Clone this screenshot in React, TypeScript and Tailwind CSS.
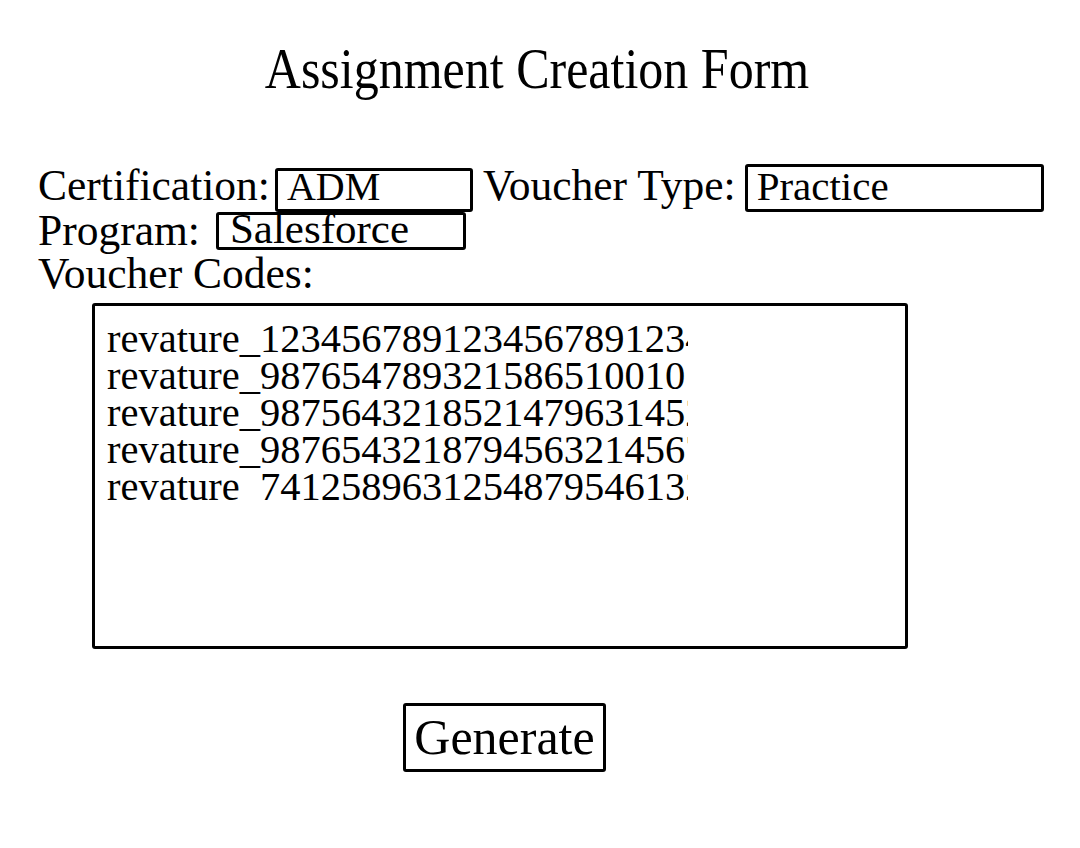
import React from 'react';

const CODES = [
  'revature_1234567891234567891234567',
  'revature_9876547893215865100101234',
  'revature_9875643218521479631452587',
  'revature_9876543218794563214567893',
  'revature_7412589631254879546132589',
];

export default function App() {
  return (
    <div className="min-h-screen bg-white text-black font-['Liberation_Serif',serif]">
      <div className="pt-[38px] pr-[6px] text-center">
        <h1 className="inline-block text-[50px] leading-[60px] font-normal scale-y-[1.15]">
          Assignment Creation Form
        </h1>
      </div>

      <div className="mt-[66px] pl-[38px]">
        {/* row 1 */}
        <div className="flex items-start">
          <span className="text-[43.5px] leading-[43px] whitespace-nowrap">Certification:</span>
          <div className="mt-[4px] ml-[5px] h-[44px] w-[198px] border-[3px] border-black rounded-[3px] pl-[9px] text-[40px] leading-[31px]">
            ADM
          </div>
          <span className="ml-[10px] text-[43.5px] leading-[43px] whitespace-nowrap">Voucher Type:</span>
          <div className="ml-[9px] h-[48px] w-[299px] border-[3px] border-black rounded-[3px] pl-[9px] text-[41px] leading-[38px]">
            Practice
          </div>
        </div>

        {/* row 2 */}
        <div className="flex items-start">
          <span className="text-[43.5px] leading-[37px] whitespace-nowrap">Program:</span>
          <div className="ml-[16px] h-[38px] w-[250px] border-[3px] border-black rounded-[3px] pl-[11px] text-[43px] leading-[27px]">
            Salesforce
          </div>
        </div>

        {/* row 3 */}
        <div className="text-[43.5px] leading-[47px]">Voucher Codes:</div>

        <div className="mt-[6px] ml-[54px] h-[346px] w-[816px] border-[3px] border-black rounded-[3px] pl-[12px] pt-[14px]">
          <div className="h-[182px] w-[581px] overflow-hidden whitespace-nowrap text-[40.5px] leading-[37px]">
            {CODES.map(code => (
              <div key={code}>{code}</div>
            ))}
          </div>
        </div>

        <div className="mt-[54px] ml-[365px]">
          <button className="h-[69px] w-[203px] border-[3px] border-black rounded-[3px] bg-white text-[50px] leading-[63px] font-['Liberation_Serif',serif]">
            Generate
          </button>
        </div>
      </div>
    </div>
  );
}
